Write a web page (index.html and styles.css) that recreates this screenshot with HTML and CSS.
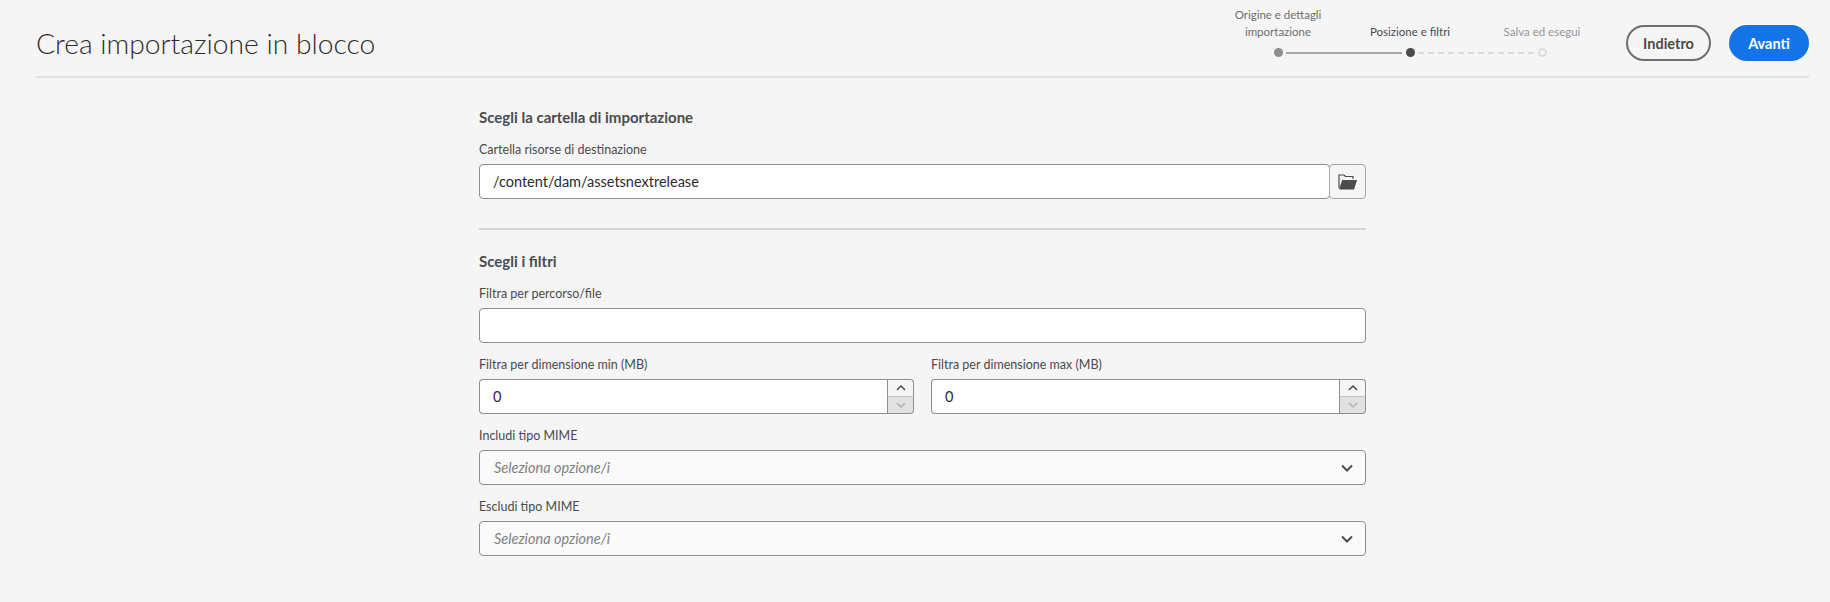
FILE: index.html
```html
<!DOCTYPE html>
<html lang="it">
<head>
  <meta charset="UTF-8">
  <title>Crea importazione in blocco</title>
  <link rel="stylesheet" href="styles.css">
</head>
<body>
  <header class="top-bar">
    <h1>Crea importazione in blocco</h1>
    <div class="top-actions">
      <ol class="steps">
        <li class="step done">
          <span class="step-label">Origine e dettagli<br>importazione</span>
          <span class="step-marker"></span>
        </li>
        <li class="step current">
          <span class="step-label">Posizione e filtri</span>
          <span class="step-marker"></span>
        </li>
        <li class="step todo">
          <span class="step-label">Salva ed esegui</span>
          <span class="step-marker"></span>
        </li>
      </ol>
      <button type="button" class="btn btn-back">Indietro</button>
      <button type="button" class="btn btn-next">Avanti</button>
    </div>
  </header>

  <form class="import-form">
    <h2>Scegli la cartella di importazione</h2>
    <label>Cartella risorse di destinazione</label>
    <div class="path-field">
      <input type="text" value="/content/dam/assetsnextrelease">
      <button type="button" class="folder-btn">
        <svg width="19" height="16" viewBox="0 0 19 16"><path d="M1 14V1h5l1.5 1.5H15V5" fill="none" stroke="#4b4b4b" stroke-width="1.2"/><path fill="#4b4b4b" d="M1 15.5L4.2 6H19l-3 9.5z"/></svg>
      </button>
    </div>

    <hr>

    <h2>Scegli i filtri</h2>
    <label>Filtra per percorso/file</label>
    <input type="text" class="full-input">

    <div class="size-row">
      <div>
        <label>Filtra per dimensione min (MB)</label>
        <div class="stepper">
          <input type="text" value="0">
          <div class="stepper-btns">
            <span><svg width="10" height="6" viewBox="0 0 10 6"><path d="M1 5l4-4 4 4" fill="none" stroke="#4b4b4b" stroke-width="1.5"/></svg></span>
            <span class="off"><svg width="10" height="6" viewBox="0 0 10 6"><path d="M1 1l4 4 4-4" fill="none" stroke="#b3b3b3" stroke-width="1.5"/></svg></span>
          </div>
        </div>
      </div>
      <div>
        <label>Filtra per dimensione max (MB)</label>
        <div class="stepper">
          <input type="text" value="0">
          <div class="stepper-btns">
            <span><svg width="10" height="6" viewBox="0 0 10 6"><path d="M1 5l4-4 4 4" fill="none" stroke="#4b4b4b" stroke-width="1.5"/></svg></span>
            <span class="off"><svg width="10" height="6" viewBox="0 0 10 6"><path d="M1 1l4 4 4-4" fill="none" stroke="#b3b3b3" stroke-width="1.5"/></svg></span>
          </div>
        </div>
      </div>
    </div>

    <label>Includi tipo MIME</label>
    <div class="select-box">
      <em>Seleziona opzione/i</em>
      <svg width="12" height="8" viewBox="0 0 12 8"><path d="M1 1.5l5 5 5-5" fill="none" stroke="#4b4b4b" stroke-width="2"/></svg>
    </div>

    <label>Escludi tipo MIME</label>
    <div class="select-box">
      <em>Seleziona opzione/i</em>
      <svg width="12" height="8" viewBox="0 0 12 8"><path d="M1 1.5l5 5 5-5" fill="none" stroke="#4b4b4b" stroke-width="2"/></svg>
    </div>
  </form>
</body>
</html>
```

FILE: styles.css
```css
* {
  box-sizing: border-box;
}
body {
  margin: 0;
  height: 602px;
  overflow: hidden;
  background-color: #f5f5f5;
  color: #2c2c2c;
  font-family: Lato, "Noto Sans", sans-serif;
}
.top-bar {
  display: flex;
  justify-content: space-between;
  align-items: stretch;
  height: 78px;
  margin: 0 21px 0 36px;
  border-bottom: 2px solid #e1e1e1;
}
.top-bar h1 {
  margin: 25px 0 0;
  font-size: 28.25px;
  font-weight: 300;
  line-height: 36px;
}
.top-actions {
  display: flex;
  align-items: flex-start;
}
.steps {
  display: flex;
  list-style: none;
  margin: 7px 18px 0 0;
  padding: 0;
}
.step {
  position: relative;
  width: 132px;
  height: 50px;
  display: flex;
  flex-direction: column;
  justify-content: flex-end;
  align-items: center;
  text-align: center;
  font-size: 11.5px;
  line-height: 17px;
  color: #6e6e6e;
}
.step-label {
  position: absolute;
  bottom: 17px;
  white-space: nowrap;
}
.step.current .step-label {
  color: #4b4b4b;
}
.step.todo .step-label {
  color: #959595;
}
.step-marker {
  width: 9px;
  height: 9px;
  border-radius: 50%;
  background: #8e8e8e;
}
.step.current .step-marker {
  background: #4b4b4b;
}
.step.todo .step-marker {
  background: none;
  border: 2px solid #dcdcdc;
}
.step.done::after,
.step.current::after {
  content: "";
  position: absolute;
  left: 74px;
  width: 116px;
  bottom: 3px;
  border-top: 2px solid #a6a6a6;
}
.step.current::after {
  border-top: 2px dashed #dcdcdc;
}
.btn {
  height: 36px;
  margin-top: 25px;
  padding: 0;
  border-radius: 18px;
  font-family: inherit;
  font-size: 14.5px;
  font-weight: 700;
}
.btn-back {
  width: 85px;
  border: 2px solid #6e6e6e;
  background: none;
  color: #4b4b4b;
}
.btn-next {
  width: 80px;
  margin-left: 18px;
  border: none;
  background: #1473e6;
  color: #fff;
}
.import-form {
  width: 887px;
  margin: 0 0 0 479px;
  padding-top: 29px;
}
.import-form h2 {
  margin: 0 0 15px;
  font-size: 15px;
  font-weight: 700;
  line-height: 20px;
  color: #4b4b4b;
}
.import-form label {
  display: block;
  font-size: 12.5px;
  line-height: 16px;
  margin-bottom: 6px;
  color: #4b4b4b;
}
input[type="text"] {
  height: 35px;
  padding: 0 13px;
  border: 1px solid #8e8e8e;
  border-radius: 4px;
  background: #fff;
  font-family: inherit;
  font-size: 14.5px;
  color: #2c2c2c;
}
.path-field {
  display: flex;
}
.path-field input {
  flex: 1;
  border-radius: 4px;
}
.folder-btn {
  display: flex;
  align-items: center;
  justify-content: center;
  width: 37px;
  height: 35px;
  margin-left: -1px;
  padding: 0;
  border: 1px solid #a6a6a6;
  border-radius: 4px;
  background: #f5f5f5;
}
hr {
  border: none;
  border-top: 2px solid #d5d5d5;
  margin: 29px 0 21px;
}
.full-input {
  display: block;
  width: 100%;
  margin-bottom: 14px;
}
.size-row {
  display: grid;
  grid-template-columns: 1fr 1fr;
  gap: 17px;
  margin-bottom: 14px;
}
.stepper {
  display: flex;
}
.stepper input {
  flex: 1;
  min-width: 0;
  border-radius: 4px 0 0 4px;
  border-right: none;
}
.stepper-btns {
  width: 27px;
  height: 35px;
  display: flex;
  flex-direction: column;
}
.stepper-btns span {
  flex: 1;
  display: flex;
  align-items: center;
  justify-content: center;
  border: 1px solid #8e8e8e;
  border-bottom-color: #c4c4c4;
  border-radius: 0 4px 0 0;
  background: #f5f5f5;
}
.stepper-btns span.off {
  border-top: none;
  border-bottom-color: #8e8e8e;
  border-radius: 0 0 4px 0;
  background: #e1e1e1;
}
.select-box {
  display: flex;
  justify-content: space-between;
  align-items: center;
  height: 35px;
  padding: 0 12px 0 14px;
  margin-bottom: 14px;
  border: 1px solid #8e8e8e;
  border-radius: 4px;
  background: #fafafa;
  font-size: 14.5px;
  color: #818181;
}
```
